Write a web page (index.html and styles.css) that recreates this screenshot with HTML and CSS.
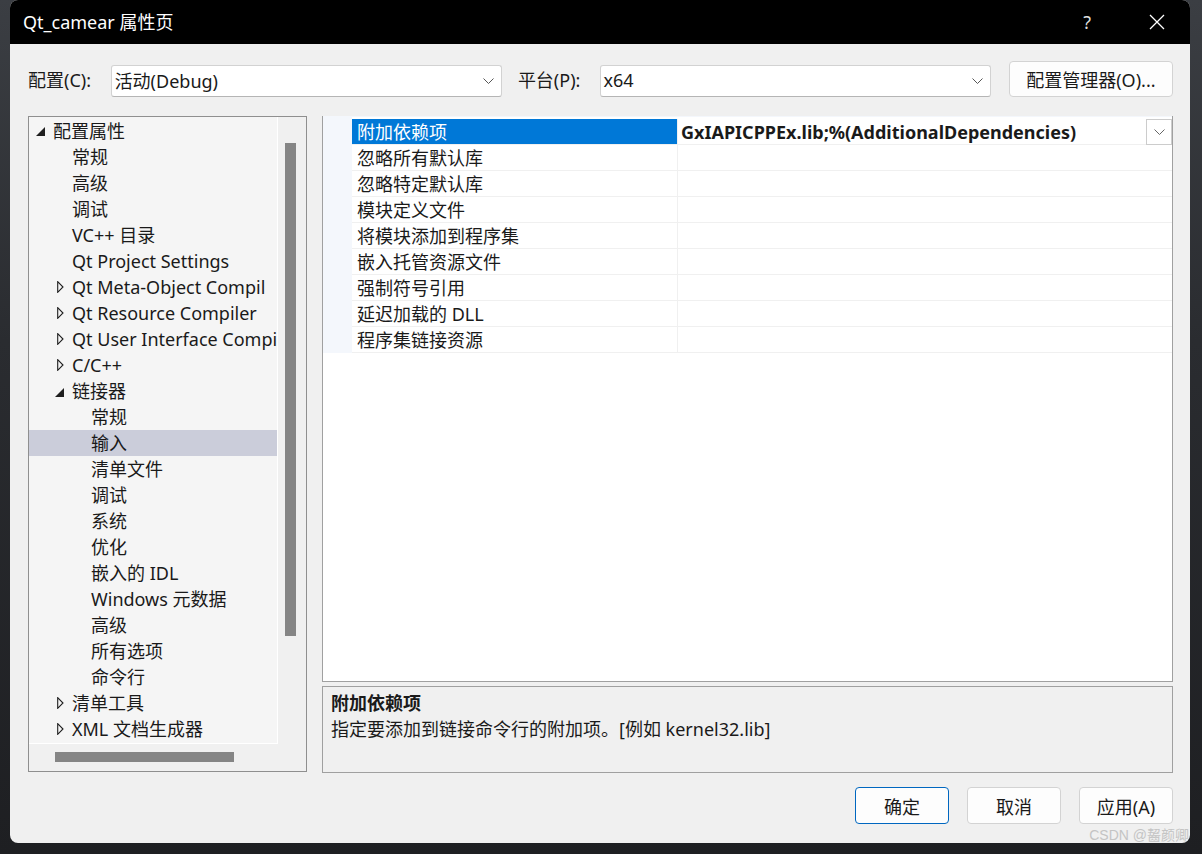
FILE: index.html
```html
<!DOCTYPE html>
<html lang="zh-CN">
<head>
    <meta charset="UTF-8">
    <title>Qt_camear 属性页</title>
    <link rel="stylesheet" href="styles.css">
</head>
<body>
    <div class="dialog">
        <div class="titlebar">
            <span class="title">Qt_camear 属性页</span>
            <span class="help">?</span>
            <svg class="close" width="16" height="16" viewBox="0 0 16 16">
                <path d="M1 1 L15 15 M15 1 L1 15" stroke="#fff" stroke-width="1.3" fill="none"/>
            </svg>
        </div>

        <div class="content">
            <div class="config-row">
                <label class="lbl">配置(C):</label>
                <div class="combo"><span>活动(Debug)</span><svg class="chev" width="11" height="7" viewBox="0 0 11 7"><path d="M0.5 0.5 L5.5 5.5 L10.5 0.5" stroke="#555" fill="none"/></svg></div>
                <label class="lbl lbl2">平台(P):</label>
                <div class="combo"><span>x64</span><svg class="chev" width="11" height="7" viewBox="0 0 11 7"><path d="M0.5 0.5 L5.5 5.5 L10.5 0.5" stroke="#555" fill="none"/></svg></div>
                <button class="btn mgr">配置管理器(O)...</button>
            </div>

            <div class="main">
                <div class="tree-panel">
                    <ul class="tree">
                        <li class="l0"><svg class="open" width="9" height="9" viewBox="0 0 9 9"><path d="M9 0 L9 9 L0 9 Z" fill="#1e1e1e"/></svg>配置属性</li>
                        <li class="l1">常规</li>
                        <li class="l1">高级</li>
                        <li class="l1">调试</li>
                        <li class="l1">VC++ 目录</li>
                        <li class="l1">Qt Project Settings</li>
                        <li class="l1"><svg class="shut" width="7" height="12" viewBox="0 0 7 12"><path d="M0.7 0.7 L6 6 L0.7 11.3 Z" stroke="#1e1e1e" stroke-width="1.1" fill="none"/></svg>Qt Meta-Object Compil</li>
                        <li class="l1"><svg class="shut" width="7" height="12" viewBox="0 0 7 12"><path d="M0.7 0.7 L6 6 L0.7 11.3 Z" stroke="#1e1e1e" stroke-width="1.1" fill="none"/></svg>Qt Resource Compiler</li>
                        <li class="l1"><svg class="shut" width="7" height="12" viewBox="0 0 7 12"><path d="M0.7 0.7 L6 6 L0.7 11.3 Z" stroke="#1e1e1e" stroke-width="1.1" fill="none"/></svg>Qt User Interface Compi</li>
                        <li class="l1"><svg class="shut" width="7" height="12" viewBox="0 0 7 12"><path d="M0.7 0.7 L6 6 L0.7 11.3 Z" stroke="#1e1e1e" stroke-width="1.1" fill="none"/></svg>C/C++</li>
                        <li class="l1"><svg class="open" width="9" height="9" viewBox="0 0 9 9"><path d="M9 0 L9 9 L0 9 Z" fill="#1e1e1e"/></svg>链接器</li>
                        <li class="l2">常规</li>
                        <li class="l2 sel">输入</li>
                        <li class="l2">清单文件</li>
                        <li class="l2">调试</li>
                        <li class="l2">系统</li>
                        <li class="l2">优化</li>
                        <li class="l2">嵌入的 IDL</li>
                        <li class="l2">Windows 元数据</li>
                        <li class="l2">高级</li>
                        <li class="l2">所有选项</li>
                        <li class="l2">命令行</li>
                        <li class="l1"><svg class="shut" width="7" height="12" viewBox="0 0 7 12"><path d="M0.7 0.7 L6 6 L0.7 11.3 Z" stroke="#1e1e1e" stroke-width="1.1" fill="none"/></svg>清单工具</li>
                        <li class="l1"><svg class="shut" width="7" height="12" viewBox="0 0 7 12"><path d="M0.7 0.7 L6 6 L0.7 11.3 Z" stroke="#1e1e1e" stroke-width="1.1" fill="none"/></svg>XML 文档生成器</li>
                    </ul>
                    <div class="vscroll"><div class="vthumb"></div></div>
                    <div class="hscroll"><div class="hthumb"></div></div>
                    <div class="corner"></div>
                </div>

                <div class="right">
                    <div class="grid">
                        <div class="rows">
                            <div class="row active">
                                <div class="name">附加依赖项</div>
                                <div class="value">GxIAPICPPEx.lib;%(AdditionalDependencies)
                                    <span class="drop"><svg width="11" height="7" viewBox="0 0 11 7"><path d="M0.5 0.5 L5.5 5.5 L10.5 0.5" stroke="#666" fill="none"/></svg></span>
                                </div>
                            </div>
                            <div class="row"><div class="name">忽略所有默认库</div><div class="value"></div></div>
                            <div class="row"><div class="name">忽略特定默认库</div><div class="value"></div></div>
                            <div class="row"><div class="name">模块定义文件</div><div class="value"></div></div>
                            <div class="row"><div class="name">将模块添加到程序集</div><div class="value"></div></div>
                            <div class="row"><div class="name">嵌入托管资源文件</div><div class="value"></div></div>
                            <div class="row"><div class="name">强制符号引用</div><div class="value"></div></div>
                            <div class="row"><div class="name">延迟加载的 DLL</div><div class="value"></div></div>
                            <div class="row"><div class="name">程序集链接资源</div><div class="value"></div></div>
                        </div>
                    </div>
                    <div class="desc">
                        <div class="desc-title">附加依赖项</div>
                        <div class="desc-text">指定要添加到链接命令行的附加项。[例如 kernel32.lib]</div>
                    </div>
                </div>
            </div>

            <div class="buttons">
                <button class="btn ok">确定</button>
                <button class="btn">取消</button>
                <button class="btn">应用(A)</button>
            </div>
        </div>
        <div class="watermark">CSDN @齧颜卿</div>
    </div>
</body>
</html>
```
FILE: styles.css
```css
body {
    margin: 0;
    height: 854px;
    overflow: hidden;
    background: linear-gradient(180deg, #3b3e43 0%, #2a2c30 40%, #1e1f22 100%);
    font-family: "Noto Sans", "Noto Sans CJK SC", sans-serif;
    font-size: 18px;
    color: #1a1a1a;
}

.dialog {
    position: relative;
    margin-left: 10px;
    width: 1180px;
    height: 843px;
    background: #f0f0f0;
    border-radius: 8px;
    overflow: hidden;
}

.titlebar {
    height: 44px;
    background: #000;
    color: #fff;
    display: flex;
    align-items: center;
    padding-left: 13px;
}

.title {
    flex: 1;
    margin-top: -2px;
}

.help {
    color: #ddd;
    margin-right: 58px;
}

.close {
    margin-right: 25px;
}

.content {
    padding: 17px 17px 0 18px;
}

.config-row {
    display: flex;
    align-items: center;
    height: 36px;
}

.lbl {
    width: 83px;
}

.lbl2 {
    margin-left: 16px;
    width: 82px;
}

.combo {
    width: 388px;
    height: 30px;
    background: #fff;
    border: 1px solid #d2d2d2;
    border-bottom-color: #b5b5b5;
    border-radius: 3px;
    display: flex;
    align-items: center;
    padding-left: 3px;
    box-sizing: content-box;
    margin-top: 4px;
}

.combo span {
    flex: 1;
    margin-top: -2px;
}

.chev {
    margin-right: 7px;
}

.btn {
    font-family: inherit;
    font-size: 18px;
    color: #1a1a1a;
    background: #fdfdfd;
    border: 1px solid #d3d3d3;
    border-radius: 4px;
    width: 94px;
    height: 37px;
    padding: 0;
}

.mgr {
    margin-left: 18px;
    width: 165px;
    height: 36px;
}

.main {
    display: flex;
    margin-top: 19px;
    height: 657px;
}

.tree-panel {
    width: 277px;
    height: 654px;
    border: 1px solid #8f8f8f;
    background: #f0f0f0;
    display: grid;
    grid-template-columns: 249px 1fr;
    grid-template-rows: 627px 1fr;
}

.tree {
    list-style: none;
    margin: 0;
    padding: 1px 0 0 0;
    background: #f5f5f5;
    border-right: 1px solid #fff;
    border-bottom: 1px solid #fff;
    overflow: hidden;
    white-space: nowrap;
}

.tree li {
    height: 26px;
    line-height: 26px;
    position: relative;
}

.l0 { padding-left: 24px; }
.l1 { padding-left: 43px; }
.l2 { padding-left: 62px; }

.tree li.sel {
    background: #cbcdda;
}

.tree svg {
    position: absolute;
    top: 9px;
}

.l0 .open { left: 7px; }
.l1 .open { left: 26px; top: 10px; }
.l1 .shut { left: 28px; top: 7px; }

.vscroll {
    padding: 26px 0 0 7px;
}

.vthumb {
    width: 11px;
    height: 493px;
    background: #858585;
}

.hscroll {
    padding: 8px 0 0 26px;
}

.hthumb {
    width: 179px;
    height: 10px;
    background: #858585;
}

.right {
    margin-left: 15px;
    width: 851px;
    display: flex;
    flex-direction: column;
}

.grid {
    height: 564px;
    border: 1px solid #a0a0a0;
    background: #fff;
}

.rows {
    padding: 2px 0 0 0;
    background: linear-gradient(90deg, #f4f7fc 29px, #fff 29px);
    border-top: 1px solid #f4f7fc;
    margin-top: -1px;
}

.row {
    display: flex;
    height: 25px;
    border-bottom: 1px solid #f0f0f0;
    margin-left: 29px;
}

.row .name {
    width: 320px;
    padding-left: 5px;
    line-height: 26px;
    border-right: 1px solid #f0f0f0;
    white-space: nowrap;
}

.row .value {
    flex: 1;
    padding-left: 3px;
    line-height: 26px;
    font-weight: bold;
    position: relative;
    white-space: nowrap;
}

.row.active .name {
    background: #0078d7;
    color: #fff;
}

.drop {
    position: absolute;
    right: 0;
    top: 0;
    width: 24px;
    height: 24px;
    border: 1px solid #cccccc;
    background: #fff;
    display: flex;
    align-items: center;
    justify-content: center;
}

.desc {
    margin-top: 4px;
    height: 85px;
    border: 1px solid #a0a0a0;
    background: #f0f0f0;
    padding-left: 8px;
}

.desc-title {
    font-weight: bold;
    margin-top: 3px;
    line-height: 26px;
}

.desc-text {
    line-height: 26px;
}

.buttons {
    display: flex;
    justify-content: flex-end;
    gap: 18px;
    margin-top: 14px;
}

.btn.ok {
    border-color: #0067c0;
}

.watermark {
    position: absolute;
    right: 1px;
    bottom: 0;
    font-family: "Liberation Sans", "Noto Sans CJK SC", sans-serif;
    font-size: 14px;
    line-height: 16px;
    color: #c4c4c4;
}
```
